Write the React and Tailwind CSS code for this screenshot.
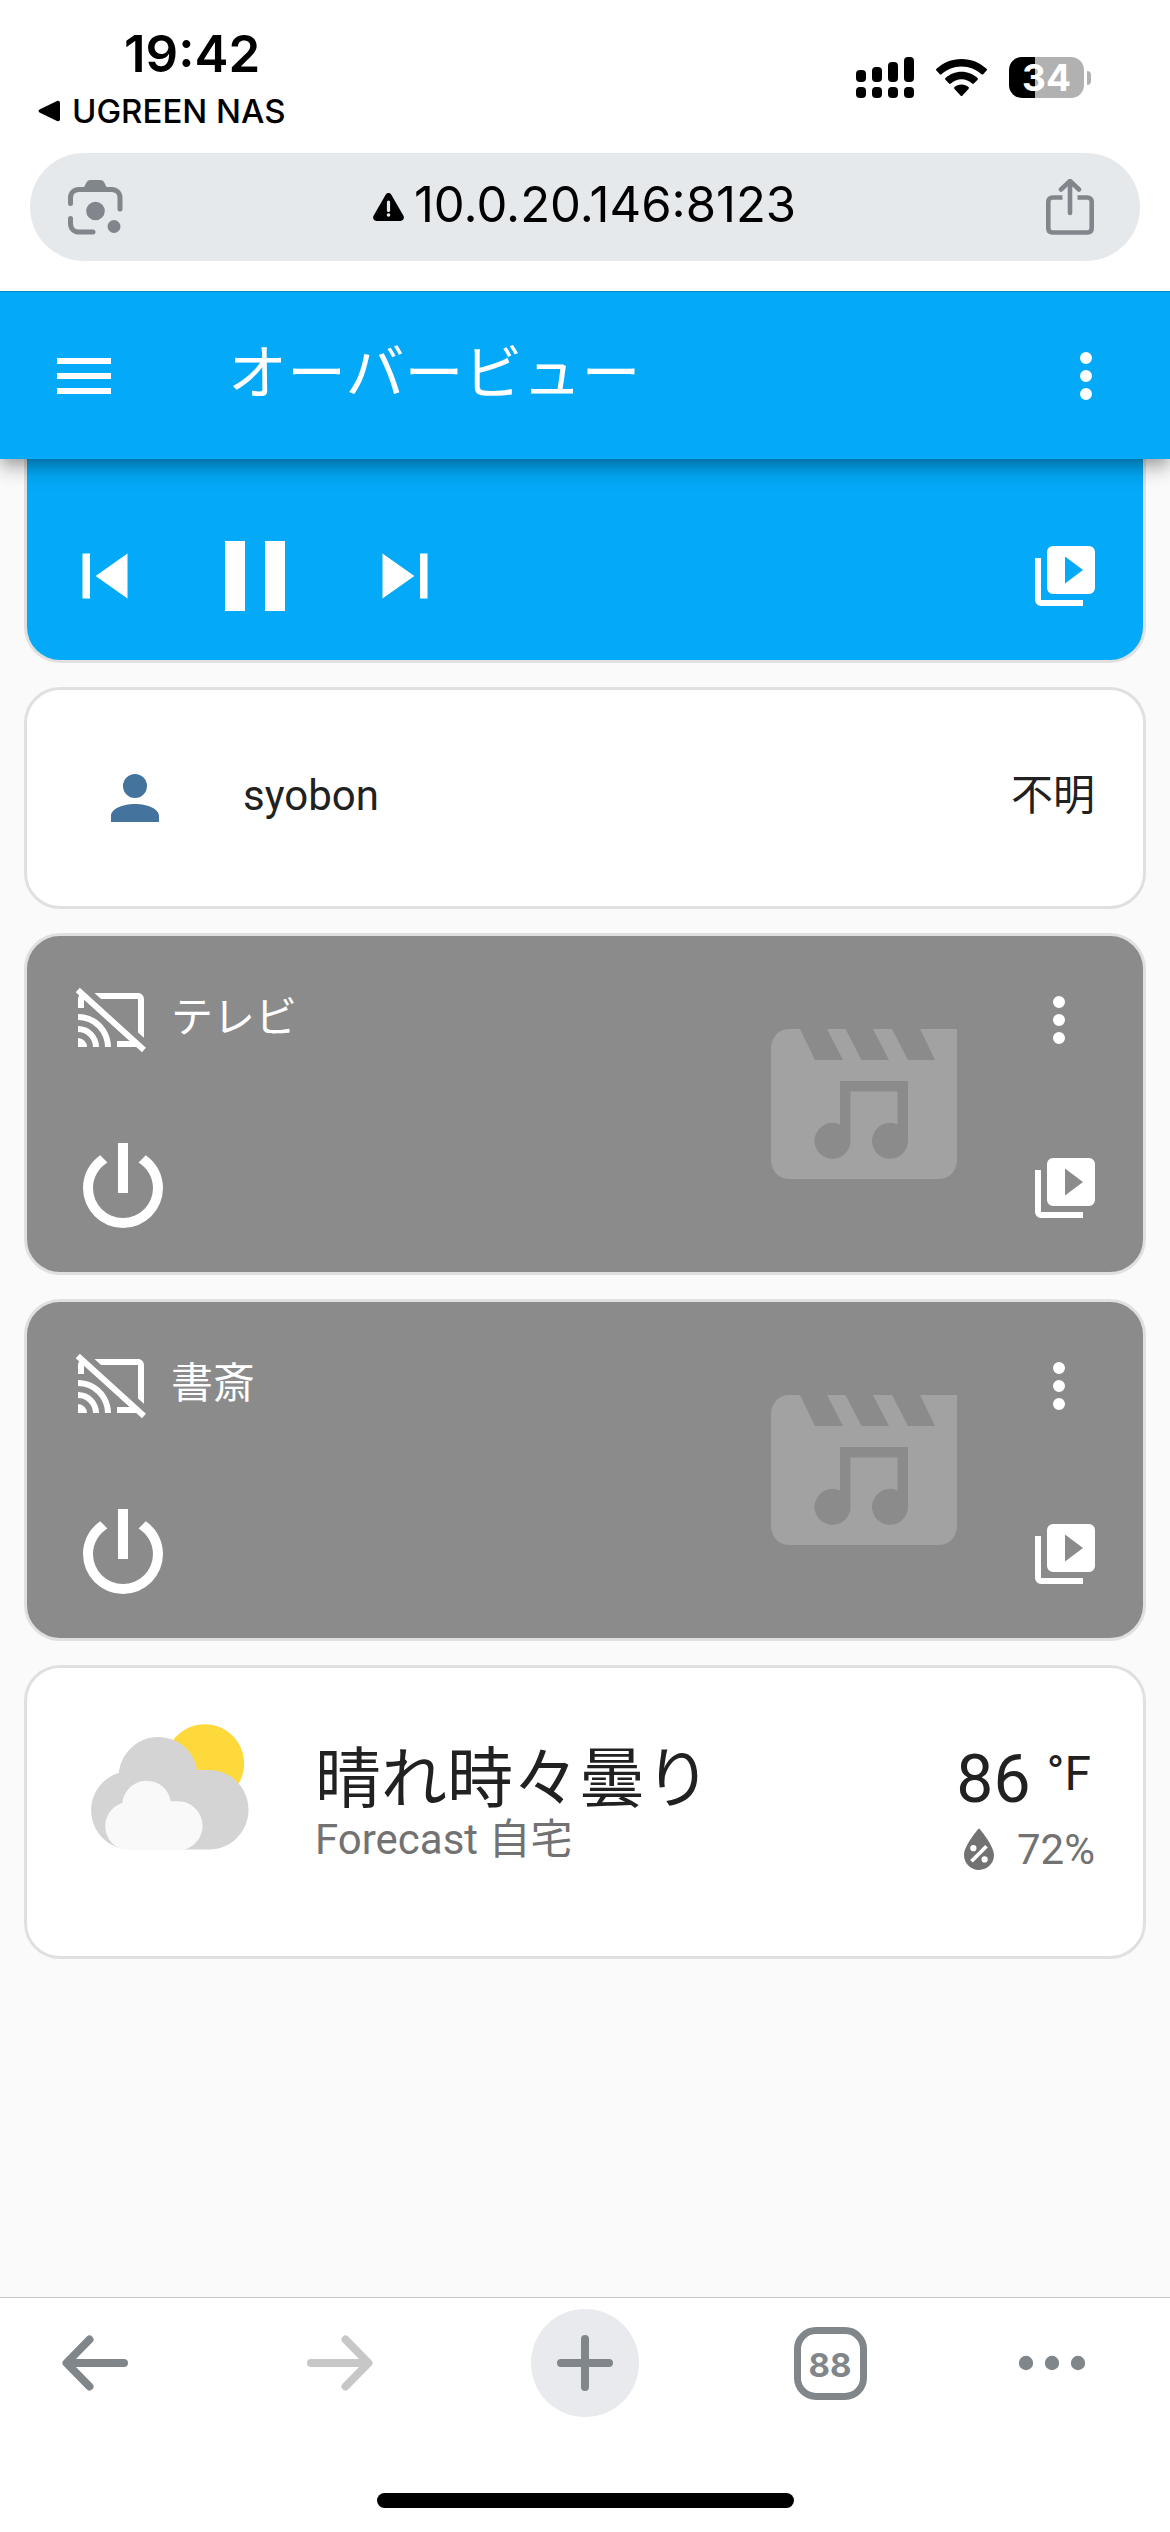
import React from "react";

const PATHS = {
  menu: "M3,6H21V8H3V6M3,11H21V13H3V11M3,16H21V18H3V16Z",
  dots: "M12,16A2,2 0 0,1 14,18A2,2 0 0,1 12,20A2,2 0 0,1 10,18A2,2 0 0,1 12,16M12,10A2,2 0 0,1 14,12A2,2 0 0,1 12,14A2,2 0 0,1 10,12A2,2 0 0,1 12,10M12,4A2,2 0 0,1 14,6A2,2 0 0,1 12,8A2,2 0 0,1 10,6A2,2 0 0,1 12,4Z",
  previous: "M6,18V6H8V18H6M9.5,12L18,6V18L9.5,12Z",
  pause: "M14,19H18V5H14M6,19H10V5H6V19Z",
  next: "M16,18H18V6H16M6,18L14.5,12L6,6V18Z",
  library:
    "M4,6H2V20A2,2 0 0,0 4,22H18V20H4V6M20,2H8A2,2 0 0,0 6,4V16A2,2 0 0,0 8,18H20A2,2 0 0,0 22,16V4A2,2 0 0,0 20,2M12,14.5V5.5L18,10L12,14.5Z",
  account:
    "M12,4A4,4 0 0,1 16,8A4,4 0 0,1 12,12A4,4 0 0,1 8,8A4,4 0 0,1 12,4M12,14C16.42,14 20,15.79 20,18V20H4V18C4,15.79 7.58,14 12,14Z",
  castOff:
    "M1.6,1.27L0.25,2.75L1.41,3.8C1.16,4.13 1,4.55 1,5V8H3V5.23L18.2,19H14V21H20.41L22.31,22.72L23.65,21.24M6.5,3L8.7,5H21V16.14L23,17.95V5C23,3.89 22.1,3 21,3M1,10V12A9,9 0 0,1 10,21H12C12,14.92 7.08,10 1,10M1,14V16A5,5 0 0,1 6,21H8A7,7 0 0,0 1,14M1,18V21H4A3,3 0 0,0 1,18Z",
  power:
    "M16.56,5.44L15.11,6.89C16.84,7.94 18,9.83 18,12A6,6 0 0,1 12,18A6,6 0 0,1 6,12C6,9.83 7.16,7.94 8.88,6.88L7.44,5.44C5.36,6.88 4,9.28 4,12A8,8 0 0,0 12,20A8,8 0 0,0 20,12C20,9.28 18.64,6.88 16.56,5.44M13,3H11V13H13",
  humidity:
    "M12,3.25C12,3.25 6,10 6,14C6,17.32 8.69,20 12,20A6,6 0 0,0 18,14C18,10 12,3.25 12,3.25M14.47,9.97L15.53,11.03L9.53,17.03L8.47,15.97M9.75,10A1.25,1.25 0 0,1 11,11.25A1.25,1.25 0 0,1 9.75,12.5A1.25,1.25 0 0,1 8.5,11.25A1.25,1.25 0 0,1 9.75,10M14.25,14.5A1.25,1.25 0 0,1 15.5,15.75A1.25,1.25 0 0,1 14.25,17A1.25,1.25 0 0,1 13,15.75A1.25,1.25 0 0,1 14.25,14.5Z",
};

function Icon({ name, className = "size-[72px]" }) {
  return (
    <svg viewBox="0 0 24 24" fill="currentColor" aria-hidden="true" className={`shrink-0 ${className}`}>
      <path d={PATHS[name]} />
    </svg>
  );
}

function StatusBar() {
  return (
    <div className="flex items-start justify-between pr-[79px] pl-[38px] text-black">
      <div className="pt-6 pb-[21px]">
        <div className="ml-[86px] text-[51px] leading-[60px] font-semibold">19:42</div>
        <a href="#nas" className="mt-1.5 flex items-center gap-3 text-[33px] leading-[42px] font-medium">
          <svg viewBox="0 0 22 22" className="size-[22px]" aria-hidden="true">
            <path d="M2 9.2 19 1c1.500-.6 3 0 3 2v16c0 2-1.500 2.600-3 2L2 12.800C0 12 0 10 2 9.200Z" />
          </svg>
          UGREEN NAS
        </a>
      </div>
      <div className="mt-[57px] flex items-center">
        <svg viewBox="0 0 58 41" className="h-[41px] w-[58px]" aria-hidden="true">
          <rect x="0" y="13" width="10" height="12" rx="4" />
          <rect x="16" y="10" width="10" height="15" rx="4" />
          <rect x="32" y="5" width="10" height="20" rx="4" />
          <rect x="48" y="0" width="10" height="25" rx="4" />
          <rect x="0" y="30" width="10" height="11" rx="4" />
          <rect x="16" y="30" width="10" height="11" rx="4" />
          <rect x="32" y="30" width="10" height="11" rx="4" />
          <rect x="48" y="30" width="10" height="11" rx="4" />
        </svg>
        <svg viewBox="0 0 51 38" className="ml-[22px] h-[38px] w-[51px]" aria-hidden="true">
          <path d="M25.500 0C35.300 0 44.100 3.700 50.500 9.800c.6.600.6 1.200.1 1.800l-3.400 3.600c-.6.600-1.300.5-1.800 0C40.200 10.300 33.300 7.400 25.500 7.400S10.800 10.300 5.600 15.200c-.5.5-1.200.6-1.800 0L.4 11.600c-.5-.6-.5-1.200.1-1.800C6.900 3.700 15.700 0 25.500 0Z" />
          <path d="M25.500 12.800c6.200 0 11.800 2.400 16 6.200.6.600.6 1.200.1 1.800l-3.700 3.700c-.6.600-1.200.5-1.800 0-2.800-2.600-6.500-4.200-10.600-4.200s-7.800 1.600-10.600 4.200c-.6.500-1.200.6-1.800 0l-3.700-3.700c-.5-.6-.5-1.200.1-1.800 4.200-3.800 9.800-6.200 16-6.200Z" />
          <path d="M25.500 25.500c2.700 0 5.200 1 7 2.600.6.600.6 1.200 0 1.800l-6 6.500c-.6.700-1.400.7-2 0l-6-6.500c-.6-.6-.6-1.200 0-1.800 1.800-1.600 4.300-2.600 7-2.600Z" />
        </svg>
        <div className="ml-[22px] flex items-center gap-[3px]">
          <div className="flex h-[41px] w-[75px] items-center justify-center rounded-[13px] bg-linear-to-r from-black from-[35%] to-[#b1b1b1] to-[35%] text-[37px] leading-[41px] font-bold text-white">
            34
          </div>
          <div className="h-[14px] w-[4px] rounded-r-full bg-[#b1b1b1]" />
        </div>
      </div>
    </div>
  );
}

function AddressBar() {
  return (
    <div className="mx-[30px] mb-[30px] flex h-[108px] items-center justify-between rounded-full bg-[#e6e9ec] pr-[46px] pl-[38px] text-[#80868b]">
      <button type="button" aria-label="画像で検索">
        <svg viewBox="0 0 55 55" className="size-[55px]" aria-hidden="true">
          <path
            d="M2.500 23.500V18C2.500 13 6 9.500 11 9.500H43.500C48.500 9.500 52 13 52 18V29M2.500 38.500V43.500C2.500 48.500 6 52 11 52H25"
            fill="none"
            stroke="currentColor"
            strokeWidth="5"
            strokeLinecap="round"
          />
          <path d="M15.500 8 18.500 2.500C19.500.8 20.500 0 22.500 0H32C34 0 35.500.8 36.300 2.500L39 8Z" fill="currentColor" />
          <circle cx="27.500" cy="31" r="9.300" fill="currentColor" />
          <circle cx="46" cy="46.500" r="6.500" fill="currentColor" />
        </svg>
      </button>
      <div className="flex items-center gap-2.5 text-black">
        <svg viewBox="0 0 31 28" className="h-[28px] w-[31px]" role="img" aria-label="保護されていない通信">
          <path d="M12.800 1.500c1.200-2 4.200-2 5.400 0L30.300 22.500c1.500 2.600 0 5.500-2.800 5.500H3.500C.7 28-.8 25.100.7 22.500Z" />
          <path d="M15.500 9v8.500" stroke="#e6e9ec" strokeWidth="3.200" strokeLinecap="round" />
          <circle cx="15.500" cy="22" r="1.800" fill="#e6e9ec" />
        </svg>
        <input
          type="text"
          aria-label="アドレス"
          defaultValue="10.0.20.146:8123"
          className="field-sizing-content bg-transparent pb-1 text-[49px] leading-[60px] outline-none"
        />
      </div>
      <button type="button" aria-label="共有">
        <svg
          viewBox="0 0 48 56"
          className="h-[56px] w-[48px]"
          fill="none"
          stroke="currentColor"
          strokeWidth="4.600"
          strokeLinecap="round"
          aria-hidden="true"
        >
          <path d="M16.500 18.500H6.500C4 18.500 2.300 20 2.300 22.500V49C2.300 52 4 53.500 6.500 53.500H41.500C44 53.500 45.700 52 45.700 49V22.500C45.700 20 44 18.500 41.500 18.500H31.500" strokeLinecap="butt" />
          <path d="M24 34V3M15 10.500 24 2 33 10.500" strokeLinejoin="round" />
        </svg>
      </button>
    </div>
  );
}

function AppHeader() {
  return (
    <header className="relative z-10 flex h-[168px] items-center border-t border-[#0388c8] bg-[#04a9f7] px-12 text-white shadow-[0_6px_12px_-3px_rgba(0,0,0,0.2),0_12px_15px_0_rgba(0,0,0,0.14),0_3px_30px_0_rgba(0,0,0,0.12)]">
      <button type="button" aria-label="メニュー">
        <Icon name="menu" />
      </button>
      <h1 className="ml-[108px] flex-1 pb-1 text-[59px] leading-[72px]">オーバービュー</h1>
      <button type="button" aria-label="その他">
        <Icon name="dots" />
      </button>
    </header>
  );
}

function PlayingCard() {
  return (
    <section className="flex items-center justify-between rounded-b-[36px] border-3 border-t-0 border-[#e0e0e0] bg-[#04a9f7] pt-[57px] pr-[42px] pb-6 pl-[3px] text-white">
      <div className="flex items-center">
        <button type="button" aria-label="前のトラック" className="flex w-[150px] justify-center">
          <Icon name="previous" className="size-[90px]" />
        </button>
        <button type="button" aria-label="一時停止" className="flex w-[150px] justify-center">
          <Icon name="pause" className="size-[120px]" />
        </button>
        <button type="button" aria-label="次のトラック" className="flex w-[150px] justify-center">
          <Icon name="next" className="size-[90px]" />
        </button>
      </div>
      <button type="button" aria-label="メディアを参照">
        <Icon name="library" />
      </button>
    </section>
  );
}

function PersonCard() {
  return (
    <section className="flex items-center rounded-[36px] border-3 border-[#e0e0e0] bg-white py-[72px] pr-12 pl-[72px] text-[42px] leading-[60px] text-[#212121]">
      <Icon name="account" className="size-[72px] text-[#44739e]" />
      <div className="ml-[72px] flex-1 pb-1">syobon</div>
      <div className="pb-1">不明</div>
    </section>
  );
}

function OffPlayerCard({ name }) {
  return (
    <section className="relative rounded-[36px] border-3 border-[#e0e0e0] bg-[#8b8b8b] text-white">
      <svg
        viewBox="0 0 186 150"
        aria-hidden="true"
        className="absolute top-[93px] right-[186px] h-[150px] w-[186px]"
      >
        <path
          d="M18 0H186V131C186 142 178 150 168 150H18C8 150 0 142 0 131V19C0 8 8 0 18 0Z"
          fill="#a2a2a2"
        />
        <g fill="#8b8b8b">
          <path d="M29 0H56L72 31H44ZM74.500 0H102L118 31H90.500ZM121 0H149L164 31H137Z" />
          <path d="M69 52H137V111.500A18 18 0 1 1 126.500 95.500V62.500H79.500V111.500A18 18 0 1 1 69 95.500Z" />
        </g>
      </svg>
      <div className="flex items-center px-12 pt-12">
        <Icon name="castOff" />
        <div className="ml-6 flex-1 pb-1 text-[42px] leading-[60px]">{name}</div>
        <button type="button" aria-label={`${name}の詳細`}>
          <Icon name="dots" />
        </button>
      </div>
      <div className="flex items-center justify-between pt-[72px] pr-[42px] pb-6 pl-9">
        <button type="button" aria-label={`${name}の電源`}>
          <Icon name="power" className="size-[120px]" />
        </button>
        <button type="button" aria-label={`${name}のメディアを参照`}>
          <Icon name="library" />
        </button>
      </div>
    </section>
  );
}

function WeatherCard() {
  return (
    <section className="flex items-start rounded-[36px] border-3 border-[#e0e0e0] bg-white p-12 text-[#212121]">
      <svg viewBox="0 0 17 17" className="size-[192px] shrink-0" role="img" aria-label="晴れ時々曇り">
        <path
          fill="#fdd93c"
          d="m14.981 4.2112c0 1.9244-1.56 3.4844-3.484 3.4844-1.9244 0-3.4844-1.56-3.4844-3.4844s1.56-3.484 3.4844-3.484c1.924 0 3.484 1.5596 3.484 3.484"
        />
        <path
          fill="#d4d4d4"
          d="m3.8863 5.035c-0.54892 0.16898-1.04 0.46637-1.4372 0.8636-0.63077 0.63041-1.0206 1.4933-1.0206 2.455 0 1.9251 1.5589 3.4682 3.4837 3.4682h6.9688c1.9251 0 3.484-1.5981 3.484-3.5232 0-1.9251-1.5589-3.5232-3.484-3.5232h-1.0834c-0.25294-1.6916-1.6986-2.9083-3.4463-2.9083-1.7995 0-3.2805 1.4153-3.465 3.1679"
        />
        <path
          fill="#f9f9f9"
          d="m4.1996 7.6995c-0.33902 0.10407-0.64276 0.28787-0.88794 0.5334-0.39017 0.38982-0.63147 0.92322-0.63147 1.5176 0 1.1896 0.96414 2.1431 2.1537 2.1431h4.3071c1.1896 0 2.153-0.98742 2.153-2.1777 0-1.1896-0.96344-2.1777-2.153-2.1777h-0.66992c-0.15593-1.0449-1.0499-1.7974-2.1297-1.7974-1.112 0-2.0274 0.87524-2.1417 1.9586"
        />
      </svg>
      <div className="ml-12 flex-1 pt-7">
        <div className="text-[66px] leading-[72px]">晴れ時々曇り</div>
        <div className="text-[42px] leading-[48px] text-[#727272]">Forecast 自宅</div>
      </div>
      <div className="flex flex-col items-end pt-7">
        <div className="mr-1 flex items-start gap-4">
          <span className="text-[66px] leading-[72px]">86</span>
          <span className="text-[48px] leading-[60px]">°F</span>
        </div>
        <div className="mt-1 flex items-center gap-2 text-[42px] leading-[60px] text-[#727272]">
          <Icon name="humidity" className="size-[60px]" />
          72%
        </div>
      </div>
    </section>
  );
}

function Arrow({ flip }) {
  return (
    <svg
      viewBox="0 0 66 56"
      className={flip ? "h-[56px] w-[66px] -scale-x-100" : "h-[56px] w-[66px]"}
      fill="none"
      stroke="currentColor"
      strokeWidth="8"
      strokeLinecap="round"
      strokeLinejoin="round"
      aria-hidden="true"
    >
      <path d="M62 28H5M27.500 4.500 4.500 28 27.500 51.500" />
    </svg>
  );
}

function BrowserToolbar() {
  return (
    <footer className="border-t border-[#c6c6c6] bg-white pb-6">
      <nav className="grid grid-cols-[190fr_300fr_190fr_300fr_144fr] items-center justify-items-center pt-[11px] pr-[46px] text-[#80868a]">
        <button type="button" aria-label="戻る">
          <Arrow />
        </button>
        <button type="button" aria-label="進む" disabled className="text-[#c7c7c7]">
          <Arrow flip />
        </button>
        <button
          type="button"
          aria-label="新しいタブ"
          className="flex size-[108px] items-center justify-center rounded-full bg-[#e8eaed]"
        >
          <svg
            viewBox="0 0 56 56"
            className="size-[56px]"
            stroke="currentColor"
            strokeWidth="8"
            strokeLinecap="round"
            aria-hidden="true"
          >
            <path d="M28 4V52M4 28H52" />
          </svg>
        </button>
        <button
          type="button"
          aria-label="タブ 88"
          className="flex size-[73px] items-center justify-center rounded-[22px] border-7 border-current pt-1 text-[33px] leading-[36px] font-bold"
        >
          88
        </button>
        <button type="button" aria-label="メニュー">
          <svg viewBox="0 0 68 16" className="h-[16px] w-[68px]" fill="currentColor" aria-hidden="true">
            <circle cx="8" cy="8" r="7.200" />
            <circle cx="34" cy="8" r="7.200" />
            <circle cx="60" cy="8" r="7.200" />
          </svg>
        </button>
      </nav>
      <div className="mx-auto mt-[76px] h-[15px] w-[417px] rounded-full bg-black" />
    </footer>
  );
}

export default function App() {
  return (
    <div lang="ja" className="flex min-h-screen flex-col bg-[#fafafa]">
      <div className="relative z-20 bg-white font-[Inter,'Noto_Sans_CJK_JP',sans-serif]">
        <StatusBar />
        <AddressBar />
      </div>
      <div className="flex flex-1 flex-col font-[Roboto,'Noto_Sans_CJK_JP',sans-serif]">
        <AppHeader />
        <main className="flex flex-1 flex-col gap-6 px-6 pb-6">
          <PlayingCard />
          <PersonCard />
          <OffPlayerCard name="テレビ" />
          <OffPlayerCard name="書斎" />
          <WeatherCard />
        </main>
      </div>
      <div className="font-[Inter,'Noto_Sans_CJK_JP',sans-serif]">
        <BrowserToolbar />
      </div>
    </div>
  );
}
